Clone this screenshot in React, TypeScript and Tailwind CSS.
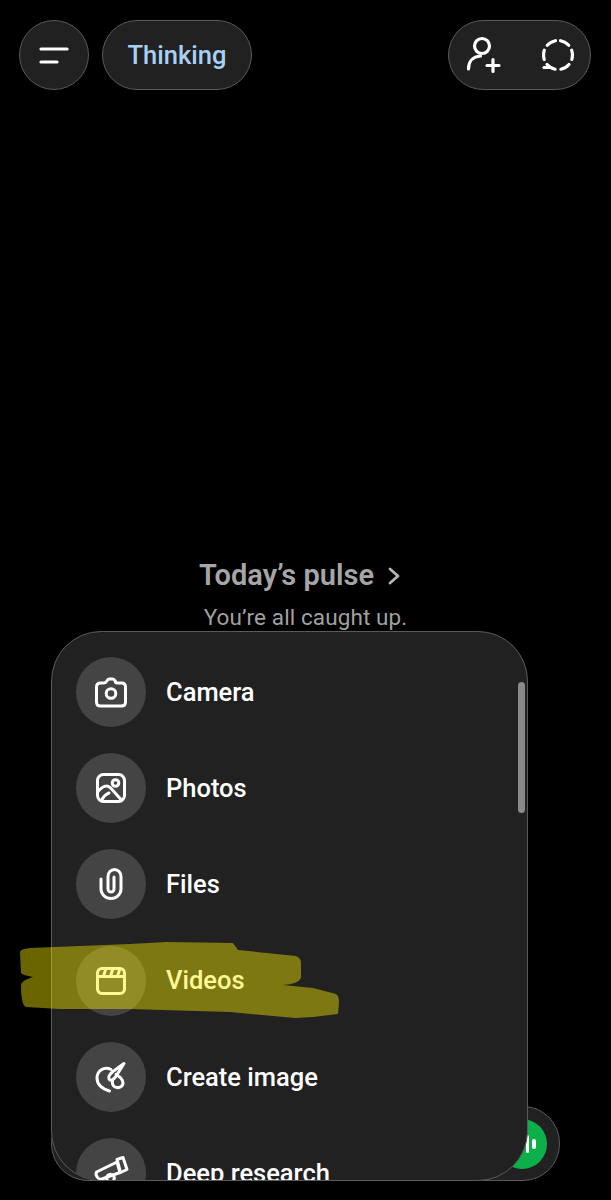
const rows = [
  { label: "Camera", icon: <CameraIcon /> },
  { label: "Photos", icon: <PhotosIcon /> },
  { label: "Files", icon: <ClipIcon /> },
  { label: "Videos", icon: <VideoIcon /> },
  { label: "Create image", icon: <BrushIcon /> },
  { label: "Deep research", icon: <TelescopeIcon /> },
];

function Svg({ children }: { children: React.ReactNode }) {
  return (
    <svg width="36" height="36" viewBox="0 0 36 36" fill="none" stroke="#fff" strokeWidth="3" strokeLinecap="round" strokeLinejoin="round">
      {children}
    </svg>
  );
}

function CameraIcon() {
  return (
    <Svg>
      <path d="M3.5 13c0-2.500 1.500-4 4-4H11c1.200 0 2-.5 2.600-1.600l.9-1.400c.5-.7 1-1 2-1h3c1 0 1.500.3 2 1l.9 1.400C22.100 8.500 22.900 9 24.100 9h4.400c2.500 0 4 1.500 4 4v15c0 2.500-1.500 4-4 4h-21c-2.500 0-4-1.500-4-4z" />
      <circle cx="18" cy="19.5" r="4.8" />
    </Svg>
  );
}

function PhotosIcon() {
  return (
    <Svg>
      <rect x="4.5" y="4.5" width="27" height="27" rx="6" />
      <circle cx="22.5" cy="13" r="3.3" />
      <path d="M4.500 22c3-3.500 6-6 9-6s4 2 15 14" />
      <path d="M8.500 30.500c2-4 4.500-6.500 7.500-7.500" />
    </Svg>
  );
}

function ClipIcon() {
  return (
    <Svg>
      <path d="M8 13v10a10 9.500 0 0 0 20 0V10.500a6.500 7 0 0 0-13 0V23a3 3 0 0 0 6 0V11" />
    </Svg>
  );
}

function VideoIcon() {
  return (
    <Svg>
      <rect x="4.5" y="5.5" width="27" height="25" rx="4.5" />
      <path d="M4.500 13.500h27M12.500 7l-1.500 4.500M19.500 7L18 11.500M26.500 7L25 11.500" />
    </Svg>
  );
}

function BrushIcon() {
  return (
    <Svg>
      <path d="M18 10.500C11 7 4 12 4 19c0 7 6 11 12.500 13" />
      <path d="M31 4.500L20 12.500c-3 2.500-5 5.500-4 7.500 1.500 2.500 4.500.5 6.500-2z" />
      <path d="M23 15.500c3.500 2 7 4.500 7 8.500s-5 5.500-8 4c-2-1-3-3-2.500-6" />
    </Svg>
  );
}

function TelescopeIcon() {
  return (
    <Svg>
      <path d="M3.500 17L24 7l3 10.500-18 6.500c-4 1-7-4-5.500-7z" />
      <path d="M24 4.500l6-2 4 12-6.500 3z" />
      <circle cx="17.5" cy="23" r="3.8" />
    </Svg>
  );
}

function Row({ label, icon }: { label: string; icon: React.ReactNode }) {
  return (
    <div className="flex shrink-0 items-center gap-5">
      <div className="flex h-[70px] w-[70px] shrink-0 items-center justify-center rounded-full bg-[#444444]">{icon}</div>
      <span className="pt-px text-[25.5px] leading-none font-medium text-white">{label}</span>
    </div>
  );
}

export default function App() {
  return (
    <div className="relative h-[1200px] overflow-hidden bg-black font-['Roboto',sans-serif]">
      <header className="flex items-center justify-between pt-5 pr-5 pl-[19px]">
        <div className="flex gap-[13px]">
          <button className="flex h-[70px] w-[70px] items-center justify-center rounded-full border border-[#5a5a5a] bg-[#212121]">
            <svg width="32" height="20" viewBox="0 0 32 20" fill="none" stroke="#fff" strokeWidth="3.2" strokeLinecap="round">
              <path d="M3 4h26M3 17h16" />
            </svg>
          </button>
          <button className="flex h-[70px] w-[150px] items-center justify-center rounded-full border border-[#5a5a5a] bg-[#212121] text-[25.5px] font-medium text-[#a8d0f5]">
            Thinking
          </button>
        </div>
        <div className="flex h-[70px] w-[143px] items-center justify-between rounded-full border border-[#5a5a5a] bg-[#212121] pr-[14px] pl-[16px]">
          <svg width="38" height="38" viewBox="0 0 38 38" fill="none" stroke="#fff" strokeWidth="3.2" strokeLinecap="round">
            <circle cx="17" cy="10" r="7.5" />
            <path d="M3.500 33c0-7 4-12.500 12-13" />
            <path d="M22 29.500h12M28 23.500v12" />
          </svg>
          <svg width="36" height="36" viewBox="0 0 36 36" fill="none" stroke="#fff" strokeWidth="3.2" strokeLinecap="round">
            <circle cx="18" cy="18" r="14.5" strokeDasharray="9.5 5.7" transform="rotate(-80 18 18)" />
            <path d="M4 30.500h6" />
          </svg>
        </div>
      </header>

      <div className="mt-[468px] flex flex-col items-center">
        <div className="flex h-9 items-center gap-[13px] pr-[11px] text-[29px] font-semibold text-[#a6a6a6]">
          Today’s pulse
          <svg width="14" height="18" viewBox="0 0 14 18" fill="none" stroke="#b4b4b4" strokeWidth="2.8" strokeLinecap="round" strokeLinejoin="round">
            <path d="M3 2l8 7-8 7" />
          </svg>
        </div>
        <p className="mt-[9px] text-[22.5px] leading-7 tracking-[0.1px] text-[#a0a0a0]">You’re all caught up.</p>
      </div>

      <div className="relative ml-[51px] h-[550px] w-[477px]">
        {/* input bar sitting behind the menu */}
        <div className="absolute right-[-32px] bottom-0 left-0 flex h-[75px] items-center justify-end rounded-[37px] border border-[#5a5a5a] bg-[#212121] pr-[12px]">
          <div className="flex h-[50px] w-[50px] items-center justify-end gap-[3px] rounded-full bg-[#0cb04a] pr-[11px]">
            <span className="h-3 w-[3px] rounded-full bg-white" />
            <span className="h-[18px] w-[3px] rounded-full bg-white" />
            <span className="h-2.5 w-[4px] rounded-full bg-white" />
          </div>
        </div>
        <div className="relative flex h-full flex-col gap-[26.2px] overflow-hidden rounded-[50px] border border-[#5a5a5a] bg-[#212121] pt-[25px] pl-6">
          {rows.map((r) => (
            <Row key={r.label} label={r.label} icon={r.icon} />
          ))}
          <div className="absolute top-[50px] right-[2px] h-[131px] w-[7px] rounded-full bg-[#8a8a8a]" />
        </div>
      </div>

      {/* highlighter scribble on top of the screenshot */}
      <svg className="pointer-events-none absolute top-0 left-0" width="611" height="1200" viewBox="0 0 611 1200">
        <path
          d="M20 952 Q20 949 30 948 L130 944 L167 942 L233 943 L238 950 L296 956 Q301 958 301 963 L301 978 Q298 984 283 985 L313 988 L336 994 Q339 996 339 1002 L338 1014 L313 1017 L295 1018 L230 1012 L130 1009 L60 1009 L26 1007 Q21 1005 21 985 Q22 980 33 977 Q22 975 21 973 Z"
          fill="#fff000"
          fillOpacity="0.42"
        />
      </svg>
    </div>
  );
}
